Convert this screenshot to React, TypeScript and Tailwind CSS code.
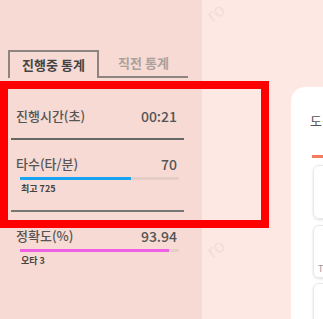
import React from "react";

const font = { fontFamily: '"Noto Sans CJK KR", "Noto Sans", sans-serif' };

interface StatRowProps {
  label: string;
  value: string;
  barColor?: string;
  percent?: number;
  sub?: string;
}

const StatRow = ({ label, value, barColor, percent = 0, sub }: StatRowProps) => (
  <div>
    <div className="flex justify-between items-center px-[5px] h-[20px]">
      <span className="text-[13px] font-medium text-[#555]">{label}</span>
      <span className="text-[14px] font-medium text-[#555] pr-[2px]">{value}</span>
    </div>
    {barColor && (
      <div className="ml-[9px] mt-[3px] w-[159px] h-[3px] bg-[#e6cdc7]">
        <div className={barColor + " h-full"} style={{ width: `${percent}%` }} />
      </div>
    )}
    {sub && <div className="ml-[10px] mt-[3px] text-[9px] leading-[12px] font-bold text-[#444]">{sub}</div>}
  </div>
);

export default function App() {
  return (
    <div className="relative flex w-[323px] h-[319px] overflow-hidden" style={font}>
      {/* sidebar */}
      <div className="w-[202px] shrink-0 bg-[#f6dad3]">
        <div className="h-[50px] overflow-hidden">
          <div className="-mt-[19px] ml-[84px] text-[15px] leading-[22px] font-bold text-[#444]">통계</div>
        </div>
        <div className="flex ml-[8px]">
          <div className="w-[91px] h-[28px] border-l-2 border-t-2 border-r-2 border-[#8e8480] flex items-center justify-center text-[13px] font-bold text-[#444]">
            진행중 통계
          </div>
          <div className="w-[89px] h-[28px] border-b-2 border-[#8e8480] flex items-center justify-center text-[13px] font-bold text-[#aaa09c]">
            직전 통계
          </div>
        </div>

        <div className="ml-[11px] w-[173px]">
          <div className="mt-[28px]">
            <StatRow label="진행시간(초)" value="00:21" />
          </div>
          <div className="mt-[12px] h-[2px] bg-[#666]" />
          <div className="mt-[14px]">
            <StatRow label="타수(타/분)" value="70" barColor="bg-[#18a4f0]" percent={70} sub="최고 725" />
          </div>
          <div className="mt-[15px] h-[2px] bg-[#777]" />
          <div className="mt-[14px]">
            <StatRow label="정확도(%)" value="93.94" barColor="bg-[#f060e4]" percent={94} sub="오타 3" />
          </div>
        </div>
      </div>

      {/* main area */}
      <div className="relative flex-1 bg-[#fde8e3] pt-[87px] pl-[89px]">
        <span className="absolute left-[4px] top-[-2px] text-[18px] text-[#f3ddd9] -rotate-[35deg]">ro</span>
        <span className="absolute left-[4px] top-[234px] text-[18px] text-[#f3ddd9] -rotate-[35deg]">ro</span>
        <div className="h-full bg-white rounded-tl-[14px] pl-[19px] pt-[26px] overflow-hidden">
          <div className="text-[13px] text-[#555] leading-[16px] whitespace-nowrap">도움말</div>
          <div className="ml-[2px] mt-[26px] h-[3px] bg-[#f47b5e]" />
          <div className="ml-[3px] mt-[7px] h-[54px] rounded-[6px] border border-[#e8e8e8] shadow-sm" />
          <div className="ml-[3px] mt-[6px] h-[53px] rounded-[6px] border border-[#e8e8e8] shadow-sm relative">
            <span className="absolute left-[4px] top-[36px] text-[9px] text-[#999]">T</span>
          </div>
          <div className="ml-[3px] mt-[5px] h-[50px] rounded-[6px] border border-[#e8e8e8] shadow-sm" />
        </div>
      </div>

      {/* highlight overlay */}
      <div className="absolute left-0 top-[81px] w-[269px] h-[147px] border-[8px] border-[#ff0000] pointer-events-none" />
    </div>
  );
}
